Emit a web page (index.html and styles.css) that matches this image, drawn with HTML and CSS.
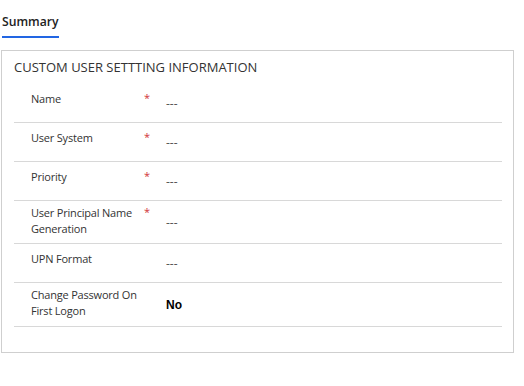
FILE: index.html
```html
<!DOCTYPE html>
<html lang="en">
<head>
    <meta charset="UTF-8">
    <meta name="viewport" content="width=device-width, initial-scale=1.0">
    <title>Summary</title>
    <link rel="stylesheet" href="styles.css">
</head>
<body>
    <div class="tabs">
        <span class="tab">Summary</span>
    </div>
    <div class="card">
        <h2 class="card-title">CUSTOM USER SETTTING INFORMATION</h2>
        <div class="field">
            <div class="label">Name<span class="req">*</span></div>
            <div class="value">---</div>
        </div>
        <div class="field">
            <div class="label">User System<span class="req">*</span></div>
            <div class="value">---</div>
        </div>
        <div class="field">
            <div class="label">Priority<span class="req">*</span></div>
            <div class="value">---</div>
        </div>
        <div class="field field-wrap">
            <div class="label">User Principal Name Generation<span class="req">*</span></div>
            <div class="value">---</div>
        </div>
        <div class="field">
            <div class="label">UPN Format</div>
            <div class="value">---</div>
        </div>
        <div class="field field-wrap">
            <div class="label">Change Password On First Logon</div>
            <div class="value value-bold">No</div>
        </div>
    </div>
</body>
</html>
```

FILE: styles.css
```css
body {
    font-family: 'Open Sans', 'Noto Sans', sans-serif;
    background-color: #ffffff;
    color: #333;
    margin: 0;
}
.tabs {
    padding-left: 2px;
    height: 38px;
}
.tab {
    display: inline-block;
    padding-top: 12px;
    padding-bottom: 4px;
    line-height: 20px;
    font-size: 12.2px;
    font-weight: 600;
    color: #222;
    border-bottom: 2px solid #2266e3;
}
.card {
    box-sizing: border-box;
    width: 513px;
    margin: 12px 0 0 1px;
    padding: 0 11px 25px 12px;
    border: 1px solid #cfcfcf;
}
.card-title {
    margin: 0;
    padding-top: 6px;
    margin-bottom: 7px;
    line-height: 20px;
    font-size: 13px;
    font-weight: 400;
    color: #333;
}
.field {
    display: flex;
    min-height: 38px;
    border-bottom: 1px solid #d8d8d8;
}
.label {
    position: relative;
    box-sizing: border-box;
    width: 152px;
    padding: 7px 25px 0 17px;
    line-height: 16px;
    font-size: 11px;
    letter-spacing: -0.2px;
    color: #333;
}
.field-wrap .label {
    padding-top: 4px;
    padding-bottom: 6px;
}
.field-wrap:last-child .label {
    padding-bottom: 7px;
}
.req {
    position: absolute;
    left: 130px;
    top: 6px;
    color: #d13438;
    font-size: 11px;
}
.field-wrap .req {
    top: 3px;
}
.value {
    align-self: center;
    font-size: 12px;
    color: #555;
}
.value-bold {
    font-family: 'Liberation Sans', Arial, sans-serif;
    font-weight: 700;
    color: #000;
}
```
